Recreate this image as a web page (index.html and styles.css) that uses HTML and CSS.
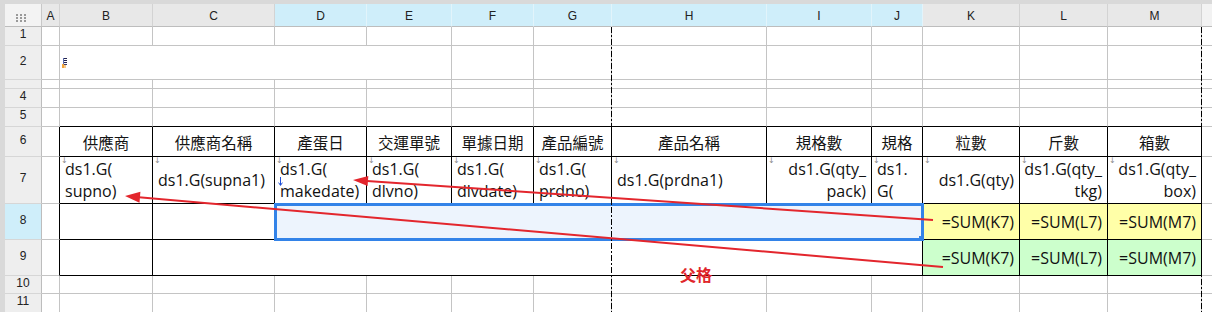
FILE: index.html
```html
<!DOCTYPE html>
<html lang="zh-Hant">
<head>
<meta charset="utf-8">
<title>報表設計</title>
<link rel="stylesheet" href="styles.css">
</head>
<body>
<div class="sheet">
  <div class="grid">
    <!-- column headers -->
    <div class="ch corner">
      <svg width="10" height="8" viewBox="0 0 10 8" fill="#9a9a9a">
        <rect x="0" y="0" width="2" height="2"/><rect x="4" y="0" width="2" height="2"/><rect x="8" y="0" width="2" height="2"/>
        <rect x="0" y="3" width="2" height="2"/><rect x="4" y="3" width="2" height="2"/><rect x="8" y="3" width="2" height="2"/>
        <rect x="0" y="6" width="2" height="2"/><rect x="4" y="6" width="2" height="2"/><rect x="8" y="6" width="2" height="2"/>
      </svg>
    </div>
    <div class="ch">A</div>
    <div class="ch">B</div>
    <div class="ch">C</div>
    <div class="ch on">D</div>
    <div class="ch on">E</div>
    <div class="ch on">F</div>
    <div class="ch on">G</div>
    <div class="ch on">H</div>
    <div class="ch on">I</div>
    <div class="ch on">J</div>
    <div class="ch">K</div>
    <div class="ch">L</div>
    <div class="ch">M</div>
    <div class="ch end"></div>

    <!-- row 1 -->
    <div class="rh">1</div>
    <div class="x"></div><div class="x"></div><div class="x"></div><div class="x"></div><div class="x"></div><div class="x"></div><div class="x"></div>
    <div class="x"></div><div class="x"></div><div class="x"></div><div class="x"></div><div class="x"></div><div class="x"></div>
    <div class="x n"></div>

    <!-- row 2 -->
    <div class="rh">2</div>
    <div class="x"></div>
    <div class="x span4 pic">
      <svg width="5" height="10" viewBox="0 0 5 10">
        <rect x="1" y="0" width="4" height="1" fill="#23234d"/>
        <rect x="1" y="2" width="4" height="1" fill="#23234d"/>
        <rect x="1" y="4" width="4" height="1" fill="#23234d"/>
        <rect x="1" y="6" width="4" height="1" fill="#3a3a6a"/>
        <rect x="1" y="0" width="1" height="8" fill="#5b6bb0"/>
        <rect x="0" y="6" width="2" height="4" fill="#f2a33a"/>
        <rect x="2" y="7" width="2" height="3" fill="#f7c98a"/>
      </svg>
    </div>
    <div class="x"></div><div class="x"></div><div class="x"></div><div class="x"></div><div class="x"></div>
    <div class="x"></div><div class="x"></div><div class="x"></div>
    <div class="x n"></div>

    <!-- row 3 (collapsed) -->
    <div class="rh"></div>
    <div class="x"></div><div class="x"></div><div class="x"></div><div class="x"></div><div class="x"></div><div class="x"></div><div class="x"></div>
    <div class="x"></div><div class="x"></div><div class="x"></div><div class="x"></div><div class="x"></div><div class="x"></div>
    <div class="x n"></div>

    <!-- row 4 -->
    <div class="rh">4</div>
    <div class="x"></div><div class="x"></div><div class="x"></div><div class="x"></div><div class="x"></div><div class="x"></div><div class="x"></div>
    <div class="x"></div><div class="x"></div><div class="x"></div><div class="x"></div><div class="x"></div><div class="x"></div>
    <div class="x n"></div>

    <!-- row 5 -->
    <div class="rh">5</div>
    <div class="x"></div>
    <div class="x top"></div><div class="x top"></div><div class="x top"></div><div class="x top"></div><div class="x top"></div><div class="x top"></div>
    <div class="x top"></div><div class="x top"></div><div class="x top"></div><div class="x top"></div><div class="x top"></div><div class="x top"></div>
    <div class="x n"></div>

    <!-- row 6: column titles -->
    <div class="rh">6</div>
    <div class="x lft"></div>
    <div class="x t lab">供應商</div>
    <div class="x t lab">供應商名稱</div>
    <div class="x t lab">產蛋日</div>
    <div class="x t lab">交運單號</div>
    <div class="x t lab">單據日期</div>
    <div class="x t lab">產品編號</div>
    <div class="x t lab">產品名稱</div>
    <div class="x t lab">規格數</div>
    <div class="x t lab">規格</div>
    <div class="x t lab">粒數</div>
    <div class="x t lab">斤數</div>
    <div class="x t lab">箱數</div>
    <div class="x n"></div>

    <!-- row 7: data fields -->
    <div class="rh">7</div>
    <div class="x lft"></div>
    <div class="x t v mk"><span>ds1.G(<br>supno)</span></div>
    <div class="x t v mk"><span>ds1.G(supna1)</span></div>
    <div class="x t v mk">
      <svg class="down" width="5" height="9" viewBox="0 0 5 9" fill="none" stroke="#1f4fd8" stroke-width="1">
        <path d="M2.5 0 V8.2 M0.6 5.6 L2.5 8.4 L4.4 5.6"/>
      </svg>
      <span>ds1.G(<br>makedate)</span>
    </div>
    <div class="x t v mk"><span>ds1.G(<br>dlvno)</span></div>
    <div class="x t v mk"><span>ds1.G(<br>dlvdate)</span></div>
    <div class="x t v mk"><span>ds1.G(<br>prdno)</span></div>
    <div class="x t v mk"><span>ds1.G(prdna1)</span></div>
    <div class="x t v r mk"><span>ds1.G(qty_<br>pack)</span></div>
    <div class="x t v mk"><span>ds1.<br>G(</span></div>
    <div class="x t v r mk"><span>ds1.G(qty)</span></div>
    <div class="x t v r mk"><span>ds1.G(qty_<br>tkg)</span></div>
    <div class="x t v r mk"><span>ds1.G(qty_<br>box)</span></div>
    <div class="x n"></div>

    <!-- row 8: subtotal -->
    <div class="rh on">8</div>
    <div class="x lft"></div>
    <div class="x t"></div>
    <div class="x t"></div>
    <div class="x t span7 selbox"></div>
    <div class="x t v r sy"><span>=SUM(K7)</span></div>
    <div class="x t v r sy"><span>=SUM(L7)</span></div>
    <div class="x t v r sy"><span>=SUM(M7)</span></div>
    <div class="x n"></div>

    <!-- row 9: total -->
    <div class="rh">9</div>
    <div class="x lft"></div>
    <div class="x t"></div>
    <div class="x t span8"></div>
    <div class="x t v r sg"><span>=SUM(K7)</span></div>
    <div class="x t v r sg"><span>=SUM(L7)</span></div>
    <div class="x t v r sg"><span>=SUM(M7)</span></div>
    <div class="x n"></div>

    <!-- row 10 -->
    <div class="rh">10</div>
    <div class="x"></div><div class="x"></div><div class="x"></div><div class="x"></div><div class="x"></div><div class="x"></div><div class="x"></div>
    <div class="x"></div><div class="x"></div><div class="x"></div><div class="x"></div><div class="x"></div><div class="x"></div>
    <div class="x n"></div>

    <!-- row 11 -->
    <div class="rh">11</div>
    <div class="x"></div><div class="x"></div><div class="x"></div><div class="x"></div><div class="x"></div><div class="x"></div><div class="x"></div>
    <div class="x"></div><div class="x"></div><div class="x"></div><div class="x"></div><div class="x"></div><div class="x"></div>
    <div class="x n"></div>
  </div>

  <!-- page breaks -->
  <div class="pb pb1"></div>
  <div class="pb pb2"></div>

  <!-- parent-cell links -->
  <svg class="links" width="1212" height="312" viewBox="0 0 1212 312">
    <g stroke="#e3262d" stroke-width="2" fill="#e3262d">
      <line x1="933" y1="220" x2="367" y2="181"/>
      <polygon stroke="none" points="353,180 368.3,176 367.6,186"/>
      <line x1="943" y1="267" x2="139" y2="197.3"/>
      <polygon stroke="none" points="125,196 140.4,191.8 139.5,202.8"/>
    </g>
  </svg>
  <div class="note">父格</div>
</div>
</body>
</html>
```

FILE: styles.css
```css
* {
  box-sizing: border-box;
}

html,
body {
  margin: 0;
  padding: 0;
}

body {
  width: 1212px;
  height: 312px;
  overflow: hidden;
  background: #d9d9d9;
  font-family: "Open Sans", "Noto Sans CJK TC", sans-serif;
  color: #111;
}

.sheet {
  position: relative;
  width: 1212px;
  height: 312px;
  padding: 4px 0 0 5px;
  overflow: hidden;
}

.grid {
  display: grid;
  grid-template-columns: 37px 18px 93px 122px 92px 85px 82px 78px 155px 105px 51px 97px 88px 94px 1fr;
  grid-template-rows: 23px 19px 34px 9px 19px 19px 30px 47px 36px 36px 18px 19px;
  background: #fff;
}

/* column headers */
.ch {
  display: flex;
  align-items: center;
  justify-content: center;
  padding-top: 2px;
  background: #e8e8e8;
  border-right: 1px solid #d3d3d3;
  border-bottom: 1px solid #bdbdbd;
  font: 12px/1 "Liberation Sans", Arial, sans-serif;
  color: #222;
}

.ch.on {
  background: #cfeefa;
  border-right-color: #e2f4fb;
}

.ch.corner {
  align-items: flex-start;
  justify-content: flex-start;
  padding: 10px 0 0 11px;
  background: #f3f3f3;
  border-right-color: #c8c8c8;
}

.ch.end {
  background: #f2f2f2;
  border-right: none;
}

/* row headers */
.rh {
  display: flex;
  align-items: center;
  justify-content: center;
  padding-bottom: 4px;
  background: #eeeeee;
  border-right: 1px solid #bdbdbd;
  border-bottom: 1px solid #d6d6d6;
  font: 12px/1 "Liberation Sans", Arial, sans-serif;
  color: #222;
}

.rh.on {
  background: #cfeefa;
}

/* cells */
.x {
  position: relative;
  display: flex;
  align-items: center;
  min-width: 0;
  overflow: hidden;
  background: #fff;
  border-right: 1px solid #c4c4c4;
  border-bottom: 1px solid #c4c4c4;
}

.x.n {
  border-right: none;
}

.span4 {
  grid-column: span 4;
}

.span7 {
  grid-column: span 7;
}

.span8 {
  grid-column: span 8;
}

.pic {
  padding-left: 2px;
}

.pic svg {
  display: block;
}

/* report table borders */
.top {
  border-bottom-color: #000;
}

.lft {
  border-right-color: #000;
}

.t {
  border-right-color: #000;
  border-bottom-color: #000;
}

.lab {
  justify-content: center;
  font-family: "Noto Sans CJK TC", sans-serif;
  font-size: 15.5px;
  color: #141414;
}

.v {
  padding: 0 5px;
  font-size: 16px;
  line-height: 22px;
  white-space: nowrap;
}

.v.r {
  justify-content: flex-end;
  text-align: right;
}

/* expand-direction marker in the top-left corner of a field cell */
.mk::before {
  content: "↓";
  position: absolute;
  left: 1px;
  top: 0;
  font: 8px/8px "DejaVu Sans", sans-serif;
  color: #8a8a8a;
}

.down {
  position: absolute;
  left: 3px;
  top: 20px;
}

.sy {
  background: #ffffa8;
}

.sg {
  background: #ccffcc;
}

/* current selection D8:J8 */
.selbox {
  z-index: 2;
  overflow: visible;
  background: #edf4fd;
  outline: 3px solid #3383e8;
  outline-offset: -2px;
}

.selbox::after {
  content: "";
  position: absolute;
  right: -2px;
  bottom: -2px;
  width: 5px;
  height: 5px;
  background: #3383e8;
}

/* page breaks */
.pb {
  position: absolute;
  top: 27px;
  bottom: 0;
  width: 1px;
  z-index: 3;
  background: repeating-linear-gradient(to bottom, #000 0 6px, transparent 6px 8px, #000 8px 10px, transparent 10px 12px);
}

.pb1 {
  left: 611px;
}

.pb2 {
  left: 1201px;
}

.links {
  position: absolute;
  left: 0;
  top: 0;
  z-index: 4;
  pointer-events: none;
}

.note {
  position: absolute;
  left: 680px;
  top: 266px;
  z-index: 4;
  font: 700 16px/16px "Noto Sans CJK TC", sans-serif;
  color: #e0262b;
}
```
